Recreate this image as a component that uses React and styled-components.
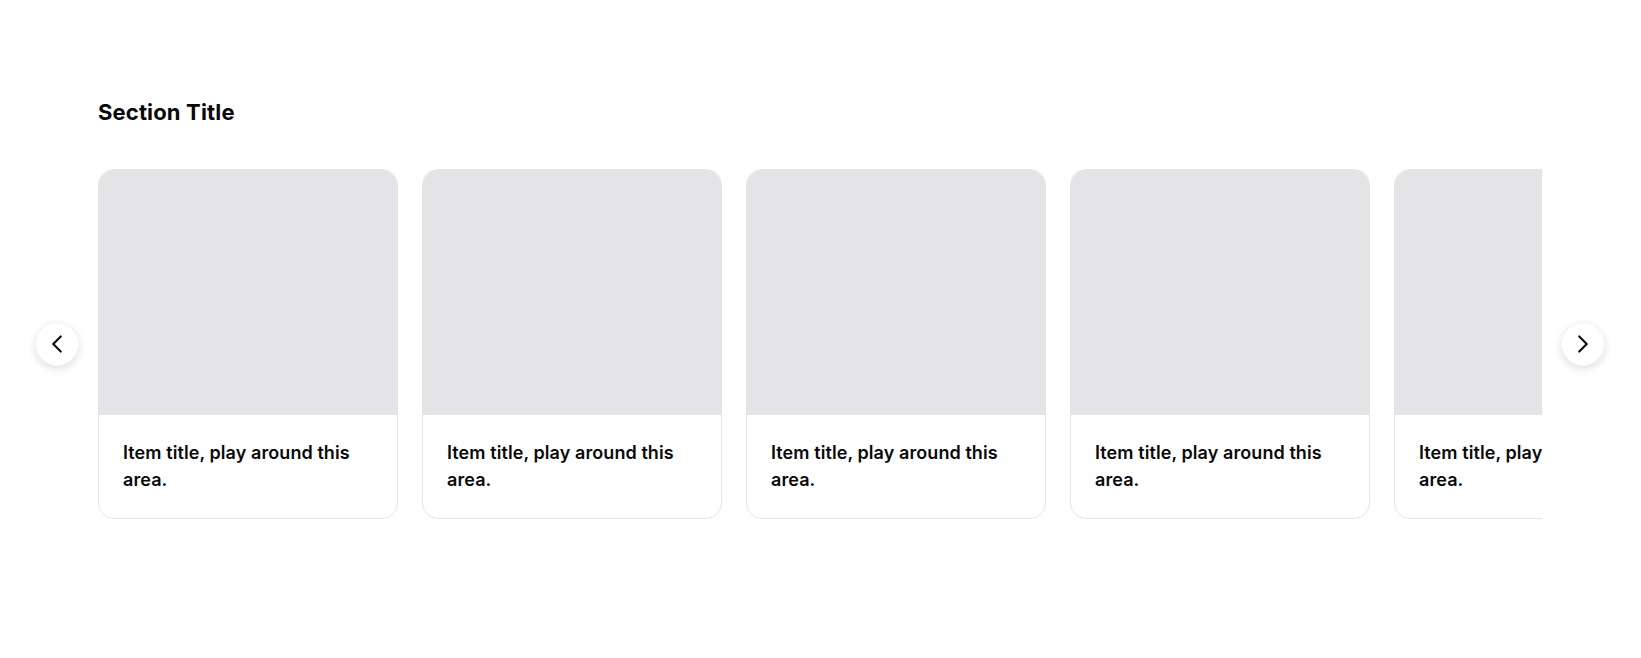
import React from "react";
import styled, { createGlobalStyle } from "styled-components";
import { ChevronLeft, ChevronRight } from "lucide-react";

const items = [1, 2, 3, 4, 5].map((id) => ({
  id,
  title: "Item title, play around this area.",
}));

function App() {
  return (
    <>
      <GlobalStyle />
      <Section>
        <Title>Section Title</Title>
        <NavButton aria-label="Previous" $side="left">
          <ChevronLeft size={30} strokeWidth={1.7} />
        </NavButton>
        <Viewport>
          <Track>
            {items.map((item) => (
              <Card key={item.id}>
                <Thumb />
                <CardBody>{item.title}</CardBody>
              </Card>
            ))}
          </Track>
        </Viewport>
        <NavButton aria-label="Next" $side="right">
          <ChevronRight size={30} strokeWidth={1.7} />
        </NavButton>
      </Section>
    </>
  );
}

const GlobalStyle = createGlobalStyle`
  body {
    margin: 0;
    background: #ffffff;
    font-family: Inter, "Noto Sans", sans-serif;
    color: #09090b;
  }
`;

const Section = styled.section`
  display: grid;
  grid-template-columns: 44px 1fr 44px;
  grid-template-rows: auto auto;
  column-gap: 19px;
  align-items: center;
  padding: 99px 36px 0 35px;
`;

const Title = styled.h2`
  grid-column: 2;
  grid-row: 1;
  margin: 0 0 44px;
  font-size: 22px;
  line-height: 1.2;
  font-weight: 700;
  letter-spacing: 0.15px;
`;

const NavButton = styled.button`
  grid-row: 2;
  grid-column: ${({ $side }) => ($side === "left" ? 1 : 3)};
  width: 44px;
  height: 44px;
  border-radius: 50%;
  border: 1px solid #f4f4f5;
  background: #ffffff;
  box-shadow: 0 3px 8px rgba(0, 0, 0, 0.12);
  display: flex;
  align-items: center;
  justify-content: center;
  padding: 0;
  color: #09090b;
  cursor: pointer;
`;

const Viewport = styled.div`
  grid-column: 2;
  grid-row: 2;
  overflow: hidden;
`;

const Track = styled.div`
  display: flex;
  gap: 24px;
`;

const Card = styled.article`
  flex: 0 0 300px;
  box-sizing: border-box;
  border: 1px solid #e4e4e7;
  border-radius: 16px;
  overflow: hidden;
  background: #ffffff;
`;

const Thumb = styled.div`
  height: 245px;
  background: #e4e4e7;
`;

const CardBody = styled.div`
  padding: 24px 24px 25px;
  font-size: 18px;
  line-height: 27px;
  font-weight: 600;
  letter-spacing: 0.08px;
`;

export default App;
